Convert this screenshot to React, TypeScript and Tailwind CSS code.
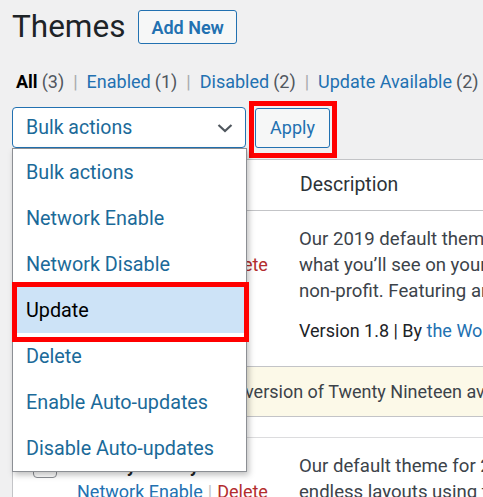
import React from 'react';

const options = [
  'Bulk actions',
  'Network Enable',
  'Network Disable',
  'Update',
  'Delete',
  'Enable Auto-updates',
  'Disable Auto-updates',
];

function Chevron() {
  return (
    <svg width="16" height="10" viewBox="0 0 16 10" fill="none" className="shrink-0">
      <path d="M1.5 2 L8 8 L14.5 2" stroke="#50575e" strokeWidth="2.2" />
    </svg>
  );
}

export default function App() {
  return (
    <div className="relative w-[483px] h-[497px] overflow-hidden bg-[#f0f0f1] font-['Roboto',sans-serif] text-[#3c434a]">
      {/* title */}
      <div className="flex items-center gap-[13px] pl-3 pt-[10px]">
        <h1 className="text-[31.5px] leading-[34px] text-[#1d2327]">Themes</h1>
        <button className="h-[34px] px-[12px] rounded-[3px] border border-[#2271b1] bg-[#f6f7f7] text-[#2271b1] text-[18px] font-semibold">
          Add New
        </button>
      </div>

      {/* filters */}
      <div className="flex items-center pl-4 mt-[26px] text-[18px] leading-[24px] whitespace-nowrap">
        <span className="font-bold text-black">All</span>
        <span className="ml-[4px] text-[#50575e]">(3)</span>
        <span className="mx-[9px] text-[#a7aaad]">|</span>
        <span className="text-[#2271b1]">Enabled</span>
        <span className="ml-[4px] text-[#50575e]">(1)</span>
        <span className="mx-[9px] text-[#a7aaad]">|</span>
        <span className="text-[#2271b1]">Disabled</span>
        <span className="ml-[4px] text-[#50575e]">(2)</span>
        <span className="mx-[9px] text-[#a7aaad]">|</span>
        <span className="text-[#2271b1]">Update Available</span>
        <span className="ml-[4px] text-[#50575e]">(2)</span>
      </div>

      {/* bulk actions */}
      <div className="flex items-center gap-[9px] pl-3 mt-[13px]">
        <div className="w-[234px] h-[41px] flex items-center justify-between pl-[13px] pr-[12px] pt-[1px] rounded-[4px] border border-[#2271b1] bg-white text-[19.5px] text-[#1b6a99]">
          <span>Bulk actions</span>
          <Chevron />
        </div>
        <div className="relative">
          <button className="h-[40px] w-[75px] rounded-[3px] border border-[#2271b1] bg-[#f6f7f7] text-[18px] text-[#2271b1]">
            Apply
          </button>
          <span className="absolute -left-[6px] -top-[7px] -right-[7px] -bottom-[10px] border-[5px] border-[#ff0000]" />
        </div>
      </div>

      {/* table */}
      <div className="ml-3 mt-[11px] w-[600px] bg-white border-l border-t border-[#c3c4c7]">
        <div className="flex h-[51px] items-center border-b border-[#c3c4c7] text-[19.4px] text-[#2c3338]">
          <div className="w-[51px] shrink-0" />
          <div className="w-[221px] shrink-0 pl-[13px]">Theme</div>
          <div className="pl-[15px] whitespace-nowrap">Description</div>
        </div>

        <div className="flex pt-[15px] pb-[22px] text-[18px] leading-[26px]">
          <div className="w-[51px] shrink-0 pl-[20px]">
            <div className="w-[24px] h-[24px] rounded-[4px] border border-[#8c8f94]" />
          </div>
          <div className="w-[221px] shrink-0 pl-[13px] whitespace-nowrap">
            <div className="font-bold text-[#1d2327]">Twenty Nineteen</div>
            <div>
              <span className="text-[#2271b1]">Network Enable</span>
              <span className="mx-[5px] text-[#c3c4c7]">|</span>
              <span className="text-[#b32d2e]">Delete</span>
            </div>
          </div>
          <div className="pl-[14px] whitespace-nowrap">
            <div className="text-[18.6px]">Our 2019 default theme is designed to show off the power of the block editor.</div>
            <div className="text-[18.6px]">what you’ll see on your website. Twenty Nineteen is designed to be adaptable</div>
            <div className="text-[18.6px]">non-profit. Featuring ample whitespace and modern sans-serif headlines</div>
            <div className="mt-[14px] text-[#1d2327]">
              Version 1.8 | By <span className="text-[#2271b1]">the WordPress team</span>
            </div>
          </div>
        </div>

        <div className="h-[51px] flex items-center bg-[#fcf9e8] border-y border-[#c3c4c7] text-[18px] whitespace-nowrap">
          <span className="pl-[112px]">There is a new version of Twenty Nineteen available.</span>
        </div>

        <div className="h-[21px] border-b border-[#dcdcde]" />

        <div className="flex pt-[15px] text-[18px] leading-[26px]">
          <div className="w-[51px] shrink-0 pl-[20px] pt-[1px]">
            <div className="w-[24px] h-[24px] rounded-[4px] border border-[#8c8f94]" />
          </div>
          <div className="w-[221px] shrink-0 pl-[13px] whitespace-nowrap">
            <div className="font-bold text-[#1d2327]">Twenty Twenty</div>
            <div>
              <span className="text-[#2271b1]">Network Enable</span>
              <span className="mx-[5px] text-[#c3c4c7]">|</span>
              <span className="text-[#b32d2e]">Delete</span>
            </div>
          </div>
          <div className="pl-[14px] whitespace-nowrap text-[18.6px]">
            <div>Our default theme for 2020 is designed to take full advantage</div>
            <div>endless layouts using the block editor and its flexibility</div>
          </div>
        </div>
      </div>

      {/* open select list */}
      <ul className="absolute left-3 top-[148px] w-[235px] bg-white border border-[#8c8f94] shadow-[2px_3px_6px_rgba(0,0,0,0.25)] text-[19.8px]">
        {options.map((o) => (
          <li
            key={o}
            className={
              o === 'Update'
                ? 'h-[46px] flex items-center pl-[13px] pt-[1px] bg-[#cde3f7] text-black'
                : 'h-[46px] flex items-center pl-[13px] pt-[1px] text-[#1b6a99]'
            }
          >
            {o}
          </li>
        ))}
      </ul>
      <span className="absolute left-3 top-[282px] w-[237px] h-[60px] border-[5px] border-[#ff0000]" />
    </div>
  );
}
